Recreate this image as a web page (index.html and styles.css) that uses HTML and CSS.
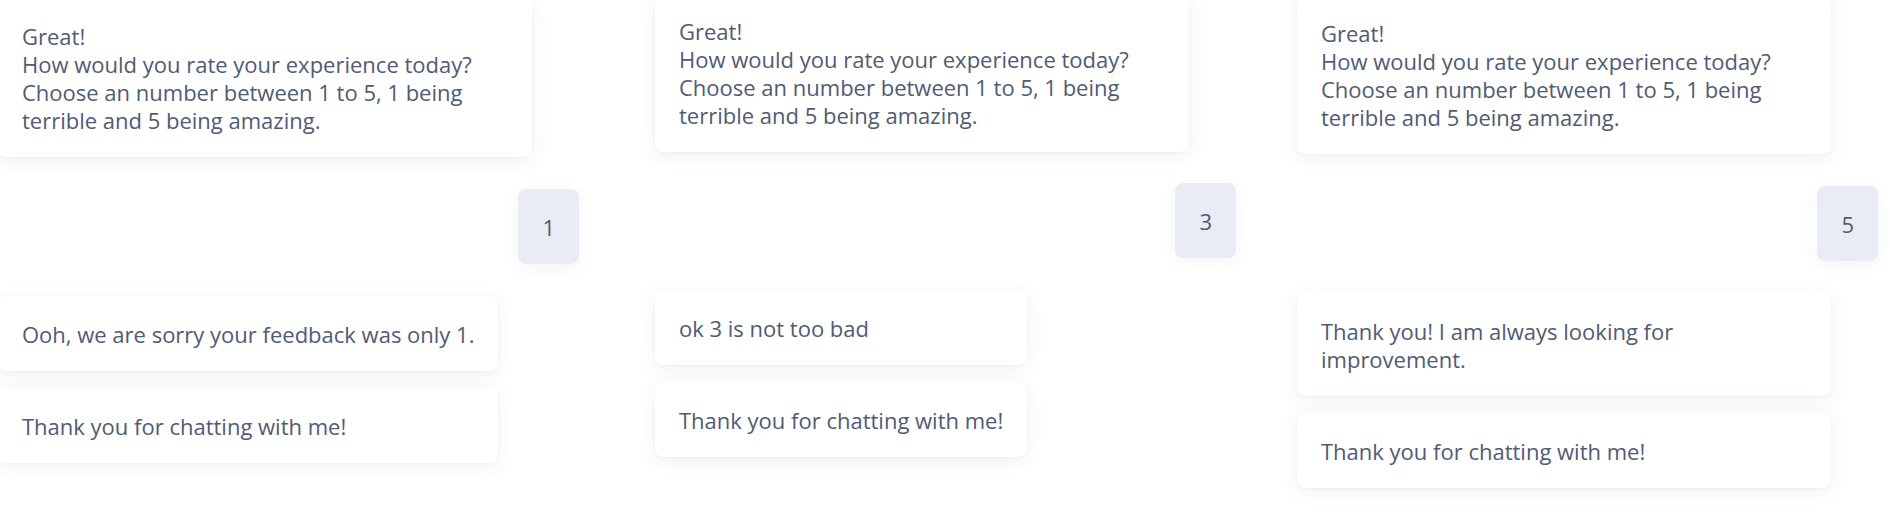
FILE: index.html
```html
<!DOCTYPE html>
<html lang="en">
<head>
<meta charset="utf-8">
<title>Chat rating</title>
<link rel="stylesheet" href="styles.css">
</head>
<body>
<div class="board">
  <div class="col col-a">
    <div class="msg msg-first">Great!<br>How would you rate your experience today? Choose an number between 1 to 5, 1 being terrible and 5 being amazing.</div>
    <div class="reply">1</div>
    <div class="group">
      <div class="msg">Ooh, we are sorry your feedback was only 1.</div>
      <div class="msg">Thank you for chatting with me!</div>
    </div>
  </div>
  <div class="col col-b">
    <div class="msg msg-first">Great!<br>How would you rate your experience today? Choose an number between 1 to 5, 1 being terrible and 5 being amazing.</div>
    <div class="reply">3</div>
    <div class="group">
      <div class="msg">ok 3 is not too bad</div>
      <div class="msg">Thank you for chatting with me!</div>
    </div>
  </div>
  <div class="col col-c">
    <div class="msg msg-first">Great!<br>How would you rate your experience today? Choose an number between 1 to 5, 1 being terrible and 5 being amazing.</div>
    <div class="reply">5</div>
    <div class="group">
      <div class="msg">Thank you! I am always looking for improvement.</div>
      <div class="msg">Thank you for chatting with me!</div>
    </div>
  </div>
</div>
</body>
</html>
```
FILE: styles.css
```css
html, body {
  margin: 0;
  padding: 0;
  background: #ffffff;
}
body {
  width: 1890px;
  height: 514px;
  overflow: hidden;
  font-family: "Open Sans", "Noto Sans", sans-serif;
  font-size: 22px;
  line-height: 28px;
  color: #505b75;
}
.board {
  display: flex;
  align-items: flex-start;
  margin-left: -2px;
}
.col {
  width: 581px;
  flex: none;
  display: flex;
  flex-direction: column;
}
.col-a { margin-top: -2px; }
.col-b { margin-top: -7px; margin-left: 76px; }
.col-c { margin-top: -5px; margin-left: 61px; }
.msg {
  box-sizing: border-box;
  padding: 23.5px 24px;
  background: #ffffff;
  border-radius: 8px;
  box-shadow: 0 4px 18px rgba(40, 50, 90, 0.07), 0 1px 3px rgba(40, 50, 90, 0.04);
}
.msg-first {
  align-self: flex-start;
  width: 534px;
}
.reply {
  align-self: flex-end;
  margin-top: 32px;
  padding: 23.5px 24px;
  background: #e9ecf5;
  border-radius: 8px;
  box-shadow: 0 4px 16px rgba(40, 50, 90, 0.05);
}
.col-b .reply { margin-top: 31px; }
.group {
  align-self: flex-start;
  max-width: 534px;
  margin-top: 32px;
  display: flex;
  flex-direction: column;
  gap: 17px;
}
```
